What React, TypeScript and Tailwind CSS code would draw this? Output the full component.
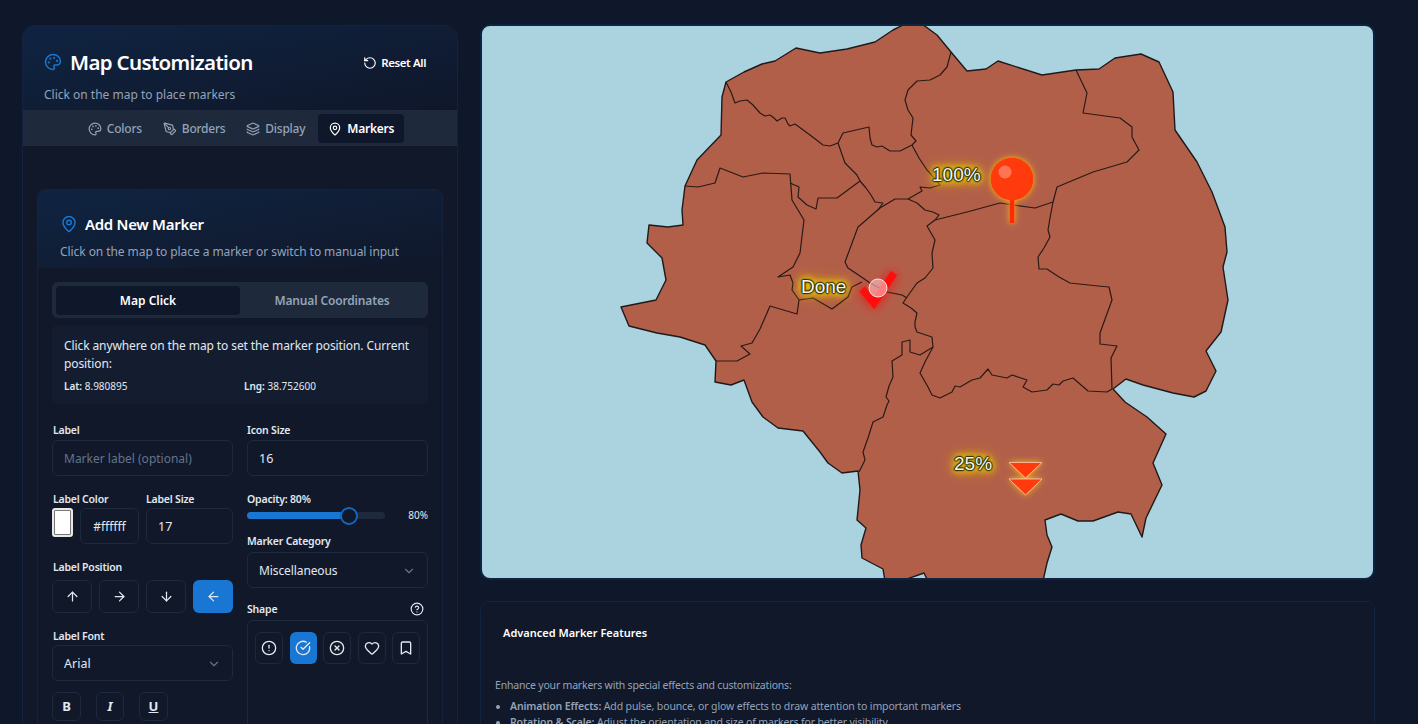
import React from 'react';
import {
  Palette, RotateCcw, PenTool, Layers, MapPin, ArrowUp, ArrowRight, ArrowDown, ArrowLeft,
  ChevronDown, CircleHelp, CircleAlert, CircleCheckBig, CircleX, Heart, Bookmark,
} from 'lucide-react';

const OUTLINE =
  'M726,82 744,72 762,64 775,61 796,48 820,53 847,49 875,42 893,30 905,24 922,24 937,35 951,52 967,71 986,69 998,61 1042,75 1076,70 1099,69 1115,58 1141,54 1159,62 1173,92 1175,130 1197,162 1212,192 1225,227 1227,252 1223,267 1228,300 1221,332 1206,351 1216,371 1206,391 1194,397 1173,393 1143,385 1126,379 1113,389 1125,402 1147,417 1166,434 1153,463 1162,485 1146,518 1142,537 1131,514 1118,512 1093,521 1078,521 1061,514 1045,520 1047,535 1052,547 1047,563 1043,581 928,581 924,573 907,579 885,581 883,569 862,558 861,545 866,528 857,520 860,490 858,471 842,473 828,463 820,452 803,431 778,428 763,417 752,402 744,380 731,385 715,382 716,361 705,345 680,337 657,333 629,326 621,307 656,300 666,280 662,258 647,243 649,225 668,227 683,225 682,210 685,186 697,160 721,135 722,97 Z';

const BORDERS = [
  'M726,82 731,92 735,103 740,101 747,100 753,105 760,113 765,116 770,115 774,118 777,121 782,118 785,118 788,124 790,126 795,124 810,135 823,145 830,146 838,143 843,133 869,127 870,138 872,145 877,147 882,146 890,151 900,151 912,145 916,141 911,135 913,118 908,110 905,100 908,90 917,81 930,80 940,75 947,67 951,52',
  'M912,145 919,158 927,170 929,172 940,185 930,188 920,187 922,191 908,199 895,199 880,208 858,227 845,262 848,268 860,276 870,283 887,292 902,295 907,298',
  'M860,181 866,188 871,195 875,202 883,203 878,210',
  'M908,199 917,203 925,210 933,212 939,215 935,220 927,226 935,240 932,253 933,268 925,278 917,283 907,297 903,303 911,308 917,313 915,322 915,327',
  'M935,220 967,212 1000,203 1035,208 1053,202 1057,187 1093,172 1127,162 1139,150 1132,137 1132,127 1120,118 1083,113 1087,93 1076,70',
  'M1053,202 1050,218 1048,230 1050,237 1044,248 1038,257 1039,269 1047,269 1059,277 1070,283 1098,286 1109,287 1112,300 1100,333 1100,344 1117,346 1111,358 1112,389',
  'M1112,389 1107,392 1088,391 1073,378 1063,381 1059,385 1053,384 1047,390 1032,392 1023,387 1027,380 1012,375 1007,378 992,375 988,369 980,378 972,380 960,387 955,386 952,392 940,398 932,395 928,387 920,373 925,362 933,347 932,337 917,332 915,327',
  'M933,347 920,355 910,352 910,340 902,342 902,355 892,361 893,377 889,386 886,397 889,401 887,405 883,417 873,422 868,438 863,452 865,460 859,472',
  'M716,361 737,361 750,354 741,346 752,343 760,329 770,306 797,314 799,300 792,290 793,283 790,275 778,277 793,267 800,253 804,220 792,200 790,174 763,173 743,177 720,168 715,183 698,187 685,186',
  'M790,183 799,187 798,197 807,205 816,209 818,198 837,198 860,181 857,175 845,163 838,143',
  'M799,300 813,298 832,309 840,303 848,297 852,287 862,282',
];

function FieldLabel({ children }: { children: React.ReactNode }) {
  return <div className="text-[10.5px] leading-[14px] font-semibold tracking-[-0.2px] text-[#e2e8f0]">{children}</div>;
}

function Box({ children, className }: { children: React.ReactNode; className: string }) {
  return (
    <div className={`flex items-center rounded-md border border-[#1e293b] pt-[2px] text-[12.5px] ${className}`}>
      {children}
    </div>
  );
}

function MapLabel({ text, className }: { text: string; className: string }) {
  return (
    <span
      className={`absolute font-['Liberation_Sans',sans-serif] text-[19px] leading-5 text-[#f5f5f0] [text-shadow:1px_0_1px_#2a2a00,-1px_0_1px_#2a2a00,0_1px_1px_#2a2a00,0_-1px_1px_#2a2a00,0_0_3px_#3a3800,0_0_5px_#f5d800,0_0_6px_#f5d800,0_0_8px_#f5d800,0_0_10px_#f5d800,0_0_13px_#e6c000,0_0_16px_#e6c000] ${className}`}
    >
      {text}
    </span>
  );
}

function MapPanel() {
  return (
    <div className="relative -mt-px h-[556px] overflow-hidden rounded-[10px] border-2 border-[#0d2340] bg-[#aad3df]">
      <svg viewBox="482 26 891 552" className="block h-full w-full">
        <defs>
          <filter id="glow" x="-50%" y="-50%" width="200%" height="200%">
            <feDropShadow dx="0" dy="0" stdDeviation="3" floodColor="#ffc800" floodOpacity="0.9" />
          </filter>
          <filter id="redglow" x="-80%" y="-80%" width="260%" height="260%">
            <feDropShadow dx="0" dy="0" stdDeviation="6" floodColor="#ff0000" floodOpacity="0.9" />
          </filter>
        </defs>
        <path d={OUTLINE} fill="#b25f4a" stroke="#1f1a1a" strokeWidth="1.4" strokeLinejoin="round" />
        {BORDERS.map((d, i) => (
          <path key={i} d={d} fill="none" stroke="#2a1a16" strokeWidth="1.2" strokeLinejoin="round" />
        ))}
        <g filter="url(#glow)">
          <rect x="1009.5" y="198" width="5" height="25" fill="#ff2a10" />
          <circle cx="1012" cy="179" r="21.5" fill="#ff3a0a" />
        </g>
        <circle cx="1005" cy="172" r="6.5" fill="#ff8060" opacity="0.85" />
        <g filter="url(#redglow)">
          <path d="M862,289 874,303 894,273" fill="none" stroke="#ff0f0f" strokeWidth="7.5" />
        </g>
        <circle cx="878" cy="288" r="9" fill="#ffd8d8" fillOpacity="0.55" stroke="#ffe4e4" strokeWidth="1" />
        <g filter="url(#glow)" fill="#ff3a0a" stroke="#ffc8b0" strokeWidth="0.8">
          <path d="M1009,462.5 1042,462.5 1025.5,478 Z" />
          <path d="M1009,479 1042,479 1025.5,495 Z" />
        </g>
      </svg>
      <MapLabel text="100%" className="left-[450px] top-[139px]" />
      <MapLabel text="Done" className="left-[319px] top-[251px]" />
      <MapLabel text="25%" className="left-[472px] top-[428px]" />
    </div>
  );
}

function FeaturesCard() {
  return (
    <div className="mt-[21px] rounded-t-lg border border-[#14233d] bg-[#10182a] pt-[21px]">
      <h3 className="pl-[22px] text-[11px] leading-5 font-semibold text-white">Advanced Marker Features</h3>
      <p className="mt-[34px] pl-[14px] text-[10.5px] leading-4 tracking-[-0.2px] text-[#94a3b8]">
        Enhance your markers with special effects and customizations:
      </p>
      <ul className="mt-[5px] list-disc pl-[29px] text-[10.5px] leading-4 tracking-[-0.13px] text-[#94a3b8]">
        <li><strong className="font-semibold">Animation Effects:</strong> Add pulse, bounce, or glow effects to draw attention to important markers</li>
        <li><strong className="font-semibold">Rotation &amp; Scale:</strong> Adjust the orientation and size of markers for better visibility</li>
      </ul>
    </div>
  );
}

function MarkerForm() {
  return (
    <div className="mt-[19px] grid grid-cols-2 gap-x-[14px]">
      <div>
        <div className="pl-px"><FieldLabel>Label</FieldLabel></div>
        <Box className="mt-[3px] h-9 px-[11px] text-[12px] text-[#64748b]">Marker label (optional)</Box>
        <div className="mt-4 flex gap-[7px]">
          <div>
            <div className="pl-px"><FieldLabel>Label Color</FieldLabel></div>
            <div className="mt-[2px] flex gap-[7px]">
              <div className="h-[29px] w-[21px] rounded-[3px] border-[2px] border-[#e8e8e8] bg-white outline-1 -outline-offset-[3px] outline-[#777]" />
              <Box className="h-9 w-[59px] justify-center text-[12px] text-[#e2e8f0]">#ffffff</Box>
            </div>
          </div>
          <div>
            <FieldLabel>Label Size</FieldLabel>
            <Box className="mt-[2px] h-9 w-[87px] px-[11px] text-[#e2e8f0]">17</Box>
          </div>
        </div>
        <div className="mt-4 pl-px"><FieldLabel>Label Position</FieldLabel></div>
        <div className="mt-[6px] flex justify-between">
          {[ArrowUp, ArrowRight, ArrowDown].map((Icon, i) => (
            <div key={i} className="flex h-[33px] w-10 items-center justify-center rounded-md border border-[#1e293b] text-[#e2e8f0]">
              <Icon size={15} />
            </div>
          ))}
          <div className="flex h-[33px] w-10 items-center justify-center rounded-md bg-[#1976d2] text-[#e2e8f0]">
            <ArrowLeft size={15} />
          </div>
        </div>
        <div className="mt-[16px] pl-px"><FieldLabel>Label Font</FieldLabel></div>
        <Box className="mt-[2px] h-9 justify-between px-[11px] text-[#e2e8f0]">
          Arial
          <ChevronDown size={14} className="text-[#64748b]" />
        </Box>
        <div className="mt-[11px] flex gap-[15px] text-[13px] text-[#e2e8f0]">
          <div className="flex h-[29px] w-[29px] items-center justify-center rounded-md border border-[#1e293b] font-bold">B</div>
          <div className="flex h-[29px] w-[28px] items-center justify-center rounded-md border border-[#1e293b] font-bold italic">I</div>
          <div className="flex h-[29px] w-[29px] items-center justify-center rounded-md border border-[#1e293b] font-bold underline">U</div>
        </div>
      </div>
      <div>
        <FieldLabel>Icon Size</FieldLabel>
        <Box className="mt-[3px] h-9 px-[11px] text-[#e2e8f0]">16</Box>
        <div className="mt-4"><FieldLabel>Opacity: 80%</FieldLabel></div>
        <div className="flex h-[18px] items-center justify-between">
          <div className="relative h-[7px] w-[138px] rounded-full bg-[#1e293b]">
            <div className="h-full w-[102px] rounded-full bg-[#1976d2]" />
            <div className="absolute -top-[5px] left-[93px] h-[18px] w-[18px] rounded-full border-2 border-[#1565c0] bg-[#10182a]" />
          </div>
          <span className="text-[10px] text-[#e2e8f0]">80%</span>
        </div>
        <div className="mt-[10px]"><FieldLabel>Marker Category</FieldLabel></div>
        <Box className="mt-[4px] h-9 justify-between px-[11px] text-[12px] tracking-[-0.1px] text-[#e2e8f0]">
          Miscellaneous
          <ChevronDown size={14} className="text-[#64748b]" />
        </Box>
        <div className="mt-[14px] flex items-center justify-between pr-[4px]">
          <FieldLabel>Shape</FieldLabel>
          <CircleHelp size={14} className="text-[#e2e8f0]" />
        </div>
        <div className="mt-[4px] h-[140px] rounded-md border border-[#1e293b] px-[7px] pt-[11px]">
          <div className="flex justify-between text-[#e2e8f0]">
            {[CircleAlert, CircleCheckBig, CircleX, Heart, Bookmark].map((Icon, i) => (
              <div
                key={i}
                className={i === 1
                  ? 'flex h-8 w-[27px] items-center justify-center rounded-md bg-[#1976d2]'
                  : 'flex h-8 w-[28px] items-center justify-center rounded-md border border-[#1e293b]'}
              >
                <Icon size={16} />
              </div>
            ))}
          </div>
        </div>
      </div>
    </div>
  );
}

function Sidebar() {
  const tabs = [
    { name: 'Colors', Icon: Palette },
    { name: 'Borders', Icon: PenTool },
    { name: 'Display', Icon: Layers },
  ];
  return (
    <aside className="h-[760px] w-[436px] shrink-0 rounded-t-xl border border-[#14233d] bg-[#10182a]">
      <div className="h-[84px] rounded-t-xl bg-gradient-to-br from-[#0f2442] to-[#0f172a] px-[21px] pt-[18px]">
        <div className="flex h-9 items-center justify-between pr-[10px]">
          <div className="flex items-center gap-2">
            <Palette size={18} className="text-[#1976d2]" />
            <h1 className="text-[20.5px] font-semibold tracking-[-0.65px] text-white">Map Customization</h1>
          </div>
          <div className="flex items-center gap-1 pt-[1px] text-[11.5px] font-semibold tracking-[-0.4px] text-white">
            <RotateCcw size={14} />
            Reset All
          </div>
        </div>
        <p className="mt-[5px] text-xs leading-5 text-[#94a3b8]">Click on the map to place markers</p>
      </div>
      <nav className="flex h-9 items-center justify-center gap-px bg-[#1e293b] pt-[1px] pl-[2px] text-xs font-medium tracking-[-0.25px] text-[#94a3b8]">
        {tabs.map(({ name, Icon }) => (
          <div key={name} className="flex items-center gap-[5px] px-[10px]">
            <Icon size={14} />
            {name}
          </div>
        ))}
        <div className="ml-[2px] flex h-[29px] items-center gap-[5px] rounded bg-[#0f172a] px-[10px] font-semibold text-white">
          <MapPin size={14} />
          Markers
        </div>
      </nav>
      <div className="mx-[14px] mt-[43px] h-[600px] rounded-lg border border-[#14233d] bg-[#10182a]">
        <div className="h-[78px] rounded-t-lg bg-gradient-to-br from-[#0f2442] to-[#10182a] px-[22px] pt-[22px]">
          <div className="flex items-center gap-[7px]">
            <MapPin size={18} className="text-[#1976d2]" />
            <h2 className="text-[15px] leading-6 font-semibold tracking-[-0.3px] text-white">Add New Marker</h2>
          </div>
          <p className="mt-[4px] text-xs leading-6 tracking-[-0.07px] text-[#94a3b8]">
            Click on the map to place a marker or switch to manual input
          </p>
        </div>
        <div className="px-[14px] pt-[14px]">
          <div className="flex h-9 items-center rounded-md bg-[#1e293b] px-1 pt-[1px] text-xs font-semibold">
            <div className="flex h-[29px] w-[184px] items-center justify-center rounded bg-[#0f172a] text-white">Map Click</div>
            <div className="flex flex-1 items-center justify-center tracking-[-0.15px] text-[#94a3b8]">Manual Coordinates</div>
          </div>
          <div className="mt-[7px] h-[79px] rounded-md bg-[#141d30] px-3 pt-3 text-xs leading-[18px] tracking-[-0.1px] text-[#e2e8f0]">
            Click anywhere on the map to set the marker position. Current position:
            <div className="mt-[5px] grid grid-cols-2 gap-2 text-[10px] leading-[16px] tracking-normal">
              <div><span className="font-semibold">Lat:</span> 8.980895</div>
              <div><span className="font-semibold">Lng:</span> 38.752600</div>
            </div>
          </div>
          <MarkerForm />
        </div>
      </div>
    </aside>
  );
}

export default function App() {
  return (
    <div className="flex h-screen gap-[22px] overflow-hidden bg-[#0f172a] pt-[25px] pl-[22px] font-['Noto_Sans',sans-serif]">
      <Sidebar />
      <main className="w-[895px] shrink-0">
        <MapPanel />
        <FeaturesCard />
      </main>
    </div>
  );
}
